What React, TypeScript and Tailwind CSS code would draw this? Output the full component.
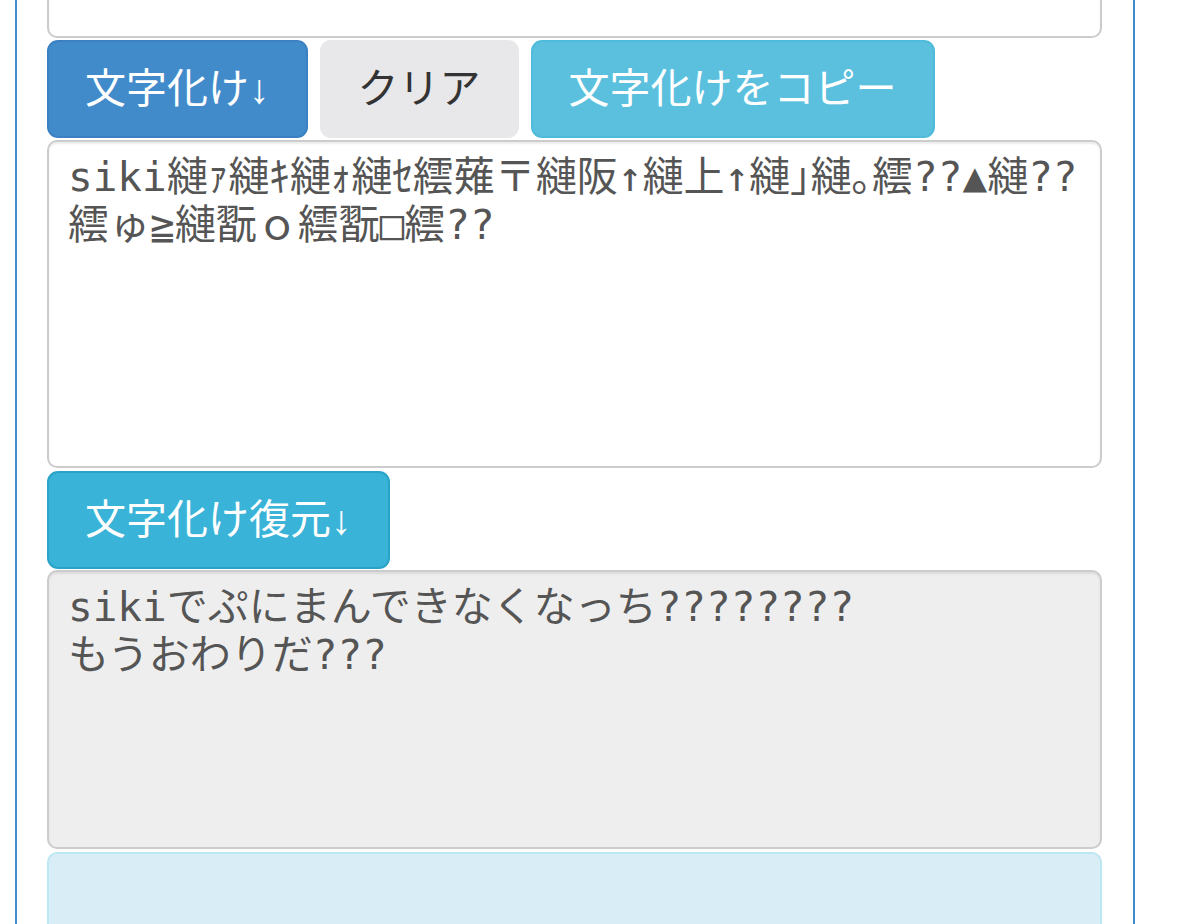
const garbled =
  'siki縺ｧ縺ｷ縺ｫ縺ｾ繧薙〒縺阪↑縺上↑縺｣縺｡繧??▲縺??\n繧ゅ≧縺翫ｏ繧翫□繧??';
const restored = 'sikiでぷにまんできなくなっち????????\nもうおわりだ???';

const btn =
  'h-[98px] px-[36px] rounded-[11px] border-2 text-[41px] leading-none whitespace-nowrap';
const area =
  'block w-full resize-none overflow-hidden rounded-[10px] border-2 border-[#cccccc] px-[19px] pt-[11px] text-[41px] leading-[48px] text-[#555555] shadow-[inset_0_2px_2px_rgba(0,0,0,0.08)] outline-none';

export default function App() {
  return (
    <div className="w-[1179px] h-[924px] overflow-hidden bg-white">
      <div
        className="ml-[15px] -mt-[60px] w-[1120px] border-x-2 border-[#428bca] pl-[30px] pr-[31px] pb-10"
        style={{ fontFamily: '"Liberation Sans", "Noto Sans CJK JP", sans-serif' }}
      >
        <textarea readOnly className={`${area} h-[98px] bg-white`} />

        <div className="mt-[2px] flex gap-3">
          <button className={`${btn} bg-[#428bca] border-[#3a80c2] text-white`}>文字化け↓</button>
          <button className={`${btn} bg-[#e8e8ea] border-[#e8e8ea] text-[#333333]`}>クリア</button>
          <button className={`${btn} bg-[#5bc0de] border-[#4fbbdb] text-white`}>文字化けをコピー</button>
        </div>

        <textarea
          readOnly
          wrap="off"
          value={garbled}
          className={`${area} mt-[2px] h-[328px] bg-white`}
          style={{ fontFamily: '"DejaVu Sans Mono", "Noto Sans CJK JP", monospace' }}
        />

        <div className="mt-[3px] flex">
          <button className={`${btn} bg-[#39b3d7] border-[#2aa3c8] text-white`}>文字化け復元↓</button>
        </div>

        <textarea
          readOnly
          wrap="off"
          value={restored}
          className={`${area} mt-px h-[279px] bg-[#eeeeee]`}
          style={{ fontFamily: '"DejaVu Sans Mono", "Noto Sans CJK JP", monospace' }}
        />

        <div className="mt-[3px] h-[160px] rounded-[10px] border-2 border-[#bce8f1] bg-[#d9edf7]" />
      </div>
    </div>
  );
}
